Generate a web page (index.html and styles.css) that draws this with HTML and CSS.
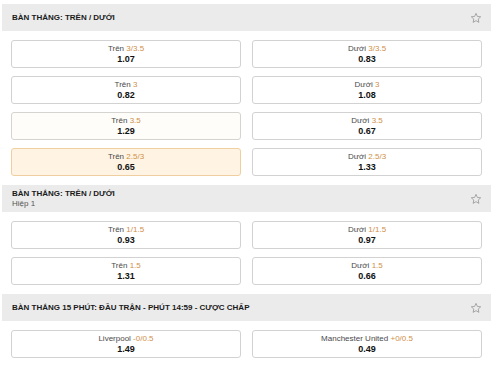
FILE: index.html
```html
<!DOCTYPE html>
<html lang="vi">
<head>
    <meta charset="UTF-8">
    <meta name="viewport" content="width=device-width, initial-scale=1.0">
    <title>Bàn thắng: Trên / Dưới</title>
    <link rel="stylesheet" href="styles.css">
</head>
<body>
    <div class="markets">
        <div class="market">
            <div class="market-head">
                <div class="market-title">
                    <div class="title">BÀN THẮNG: TRÊN / DƯỚI</div>
                </div>
                <svg class="star" viewBox="0 0 24 24"><path d="M12 2.8l2.8 6.1 6.6.7-5 4.5 1.4 6.6L12 17.3l-5.8 3.4 1.4-6.6-5-4.5 6.6-.7z"/></svg>
            </div>
            <div class="odds-grid">
                <button class="odd"><span class="label">Trên <span class="line">3/3.5</span></span><span class="price">1.07</span></button>
                <button class="odd"><span class="label">Dưới <span class="line">3/3.5</span></span><span class="price">0.83</span></button>
                <button class="odd"><span class="label">Trên <span class="line">3</span></span><span class="price">0.82</span></button>
                <button class="odd"><span class="label">Dưới <span class="line">3</span></span><span class="price">1.08</span></button>
                <button class="odd hover"><span class="label">Trên <span class="line">3.5</span></span><span class="price">1.29</span></button>
                <button class="odd"><span class="label">Dưới <span class="line">3.5</span></span><span class="price">0.67</span></button>
                <button class="odd selected"><span class="label">Trên <span class="line">2.5/3</span></span><span class="price">0.65</span></button>
                <button class="odd"><span class="label">Dưới <span class="line">2.5/3</span></span><span class="price">1.33</span></button>
            </div>
        </div>

        <div class="market">
            <div class="market-head">
                <div class="market-title">
                    <div class="title">BÀN THẮNG: TRÊN / DƯỚI</div>
                    <div class="subtitle">Hiệp 1</div>
                </div>
                <svg class="star" viewBox="0 0 24 24"><path d="M12 2.8l2.8 6.1 6.6.7-5 4.5 1.4 6.6L12 17.3l-5.8 3.4 1.4-6.6-5-4.5 6.6-.7z"/></svg>
            </div>
            <div class="odds-grid">
                <button class="odd"><span class="label">Trên <span class="line">1/1.5</span></span><span class="price">0.93</span></button>
                <button class="odd"><span class="label">Dưới <span class="line">1/1.5</span></span><span class="price">0.97</span></button>
                <button class="odd"><span class="label">Trên <span class="line">1.5</span></span><span class="price">1.31</span></button>
                <button class="odd"><span class="label">Dưới <span class="line">1.5</span></span><span class="price">0.66</span></button>
            </div>
        </div>

        <div class="market">
            <div class="market-head">
                <div class="market-title">
                    <div class="title">BÀN THẮNG 15 PHÚT: ĐẦU TRẬN - PHÚT 14:59 - CƯỢC CHẤP</div>
                </div>
                <svg class="star" viewBox="0 0 24 24"><path d="M12 2.8l2.8 6.1 6.6.7-5 4.5 1.4 6.6L12 17.3l-5.8 3.4 1.4-6.6-5-4.5 6.6-.7z"/></svg>
            </div>
            <div class="odds-grid">
                <button class="odd"><span class="label">Liverpool <span class="line">-0/0.5</span></span><span class="price">1.49</span></button>
                <button class="odd"><span class="label">Manchester United <span class="line">+0/0.5</span></span><span class="price">0.49</span></button>
            </div>
        </div>
    </div>
</body>
</html>
```

FILE: styles.css
```css
body {
    margin: 0;
    padding: 0;
    background-color: #ffffff;
    font-family: "Liberation Sans", Arial, sans-serif;
    color: #222222;
}

.markets {
    width: 489px;
    margin: 4px 0 0 2px;
}

.market-head {
    height: 27px;
    box-sizing: border-box;
    padding: 0 9px 0 10px;
    background-color: #ebebeb;
    display: flex;
    align-items: center;
    justify-content: space-between;
}

.title {
    font-size: 8px;
    font-weight: bold;
    color: #1a1a1a;
    line-height: 10px;
}

.subtitle {
    font-size: 8px;
    color: #555555;
    line-height: 10px;
}

.star {
    width: 12px;
    height: 12px;
    fill: none;
    stroke: #8a8a8a;
    stroke-width: 1.4;
    stroke-linejoin: round;
}

.odds-grid {
    display: grid;
    grid-template-columns: 230px 230px;
    column-gap: 11px;
    row-gap: 8px;
    padding: 9px 9px;
}

.odd {
    height: 28px;
    box-sizing: border-box;
    margin: 0;
    padding: 3px 0 0 0;
    border: 1px solid #d2d2d2;
    border-radius: 3px;
    background-color: #ffffff;
    font-family: inherit;
    display: flex;
    flex-direction: column;
    align-items: center;
    justify-content: flex-start;
    cursor: pointer;
}

.odd.hover {
    background-color: #fffdfa;
    border-color: #d6d4d0;
}

.odd.selected {
    background-color: #fff4e4;
    border-color: #efcf9f;
}

.label {
    font-size: 8px;
    line-height: 10px;
    color: #4a4a4a;
}

.line {
    color: #d08f48;
}

.price {
    font-size: 9px;
    font-weight: bold;
    line-height: 11px;
    color: #111111;
}
```
